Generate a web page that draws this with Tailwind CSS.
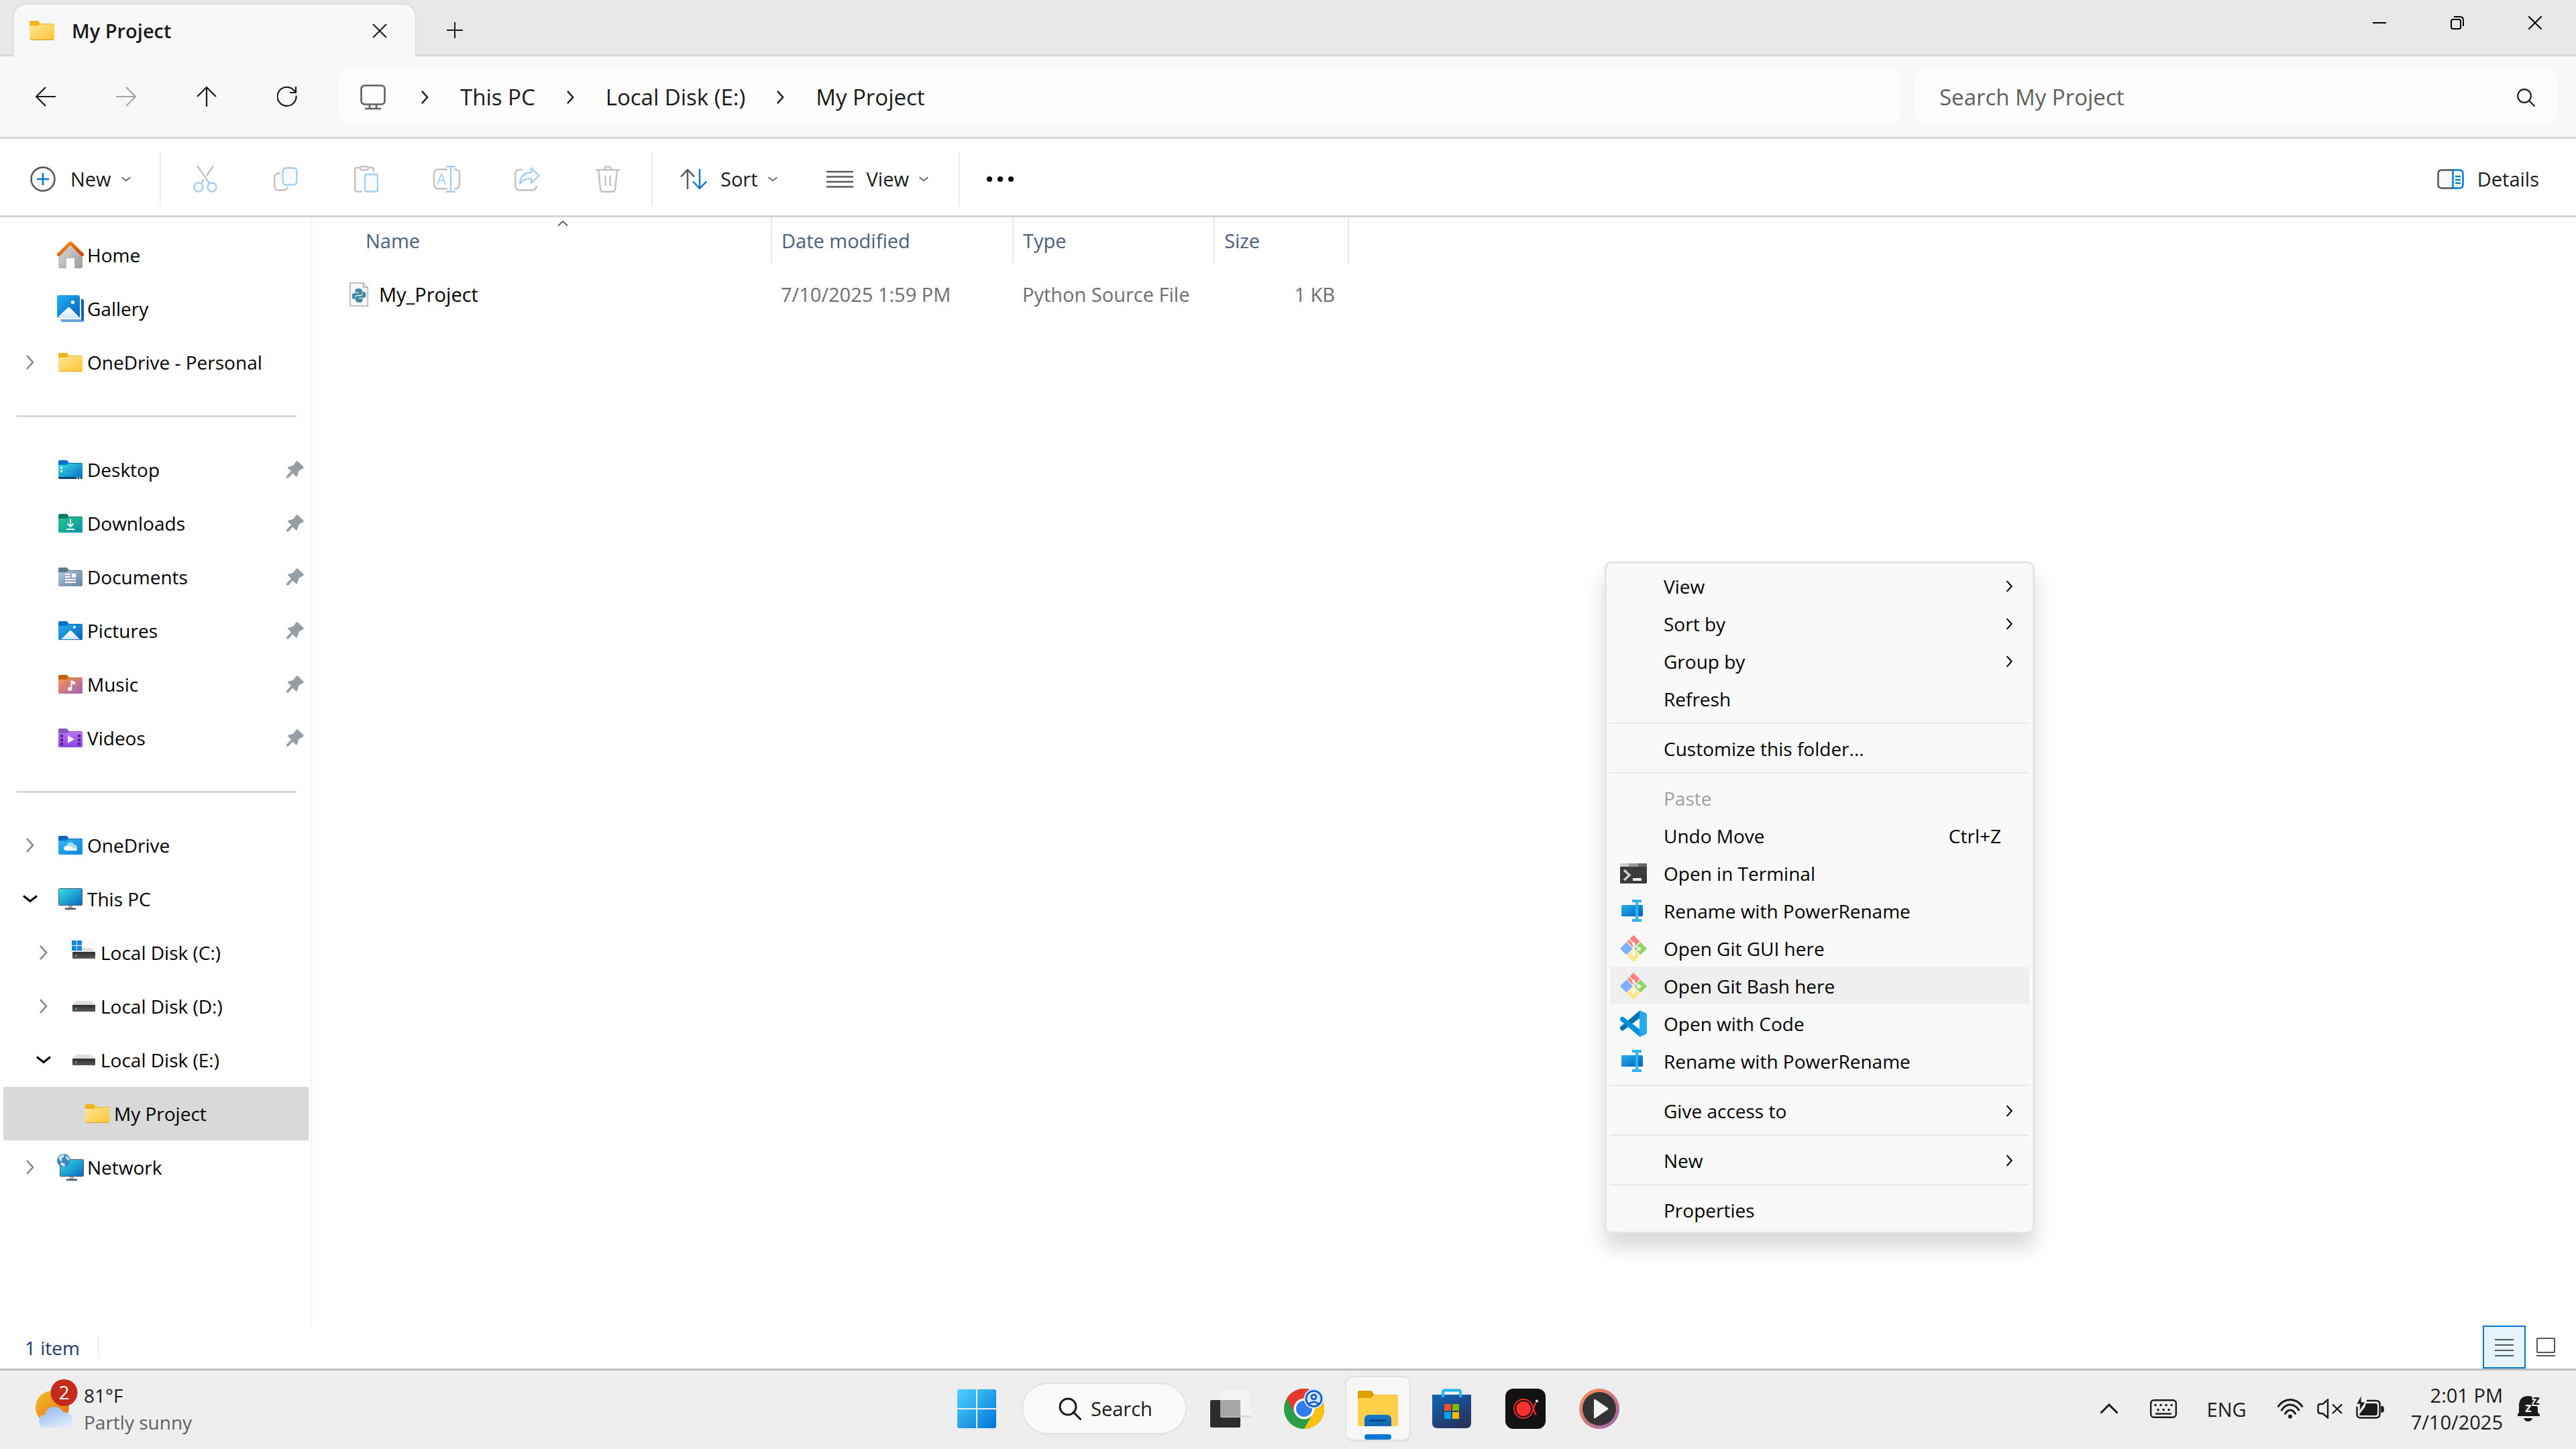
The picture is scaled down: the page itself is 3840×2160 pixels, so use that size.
<!DOCTYPE html>
<html lang="en">
<head>
  <meta charset="utf-8">
  <meta name="viewport" content="width=device-width, initial-scale=1.0">
  <title>My Project</title>
  <script src="https://cdn.jsdelivr.net/npm/@tailwindcss/browser@4"></script>
</head>
<body class="flex flex-col h-screen overflow-hidden bg-white font-['Open_Sans','Noto_Sans',sans-serif] text-[29px] leading-10 text-[#1a1a1a]">

<!-- shared icons and gradients -->
<svg class="absolute w-0 h-0" aria-hidden="true">
  <defs>
    <linearGradient id="yellow" x2="1" y2="1"><stop stop-color="#ffe69c"/><stop offset="1" stop-color="#ffc52e"/></linearGradient>
    <linearGradient id="cyan" x2="1" y2="1"><stop stop-color="#35e0e4"/><stop offset="1" stop-color="#0a68c4"/></linearGradient>
    <linearGradient id="green" x2="1" y2="1"><stop stop-color="#2fc48a"/><stop offset="1" stop-color="#0593a8"/></linearGradient>
    <linearGradient id="steel" x2="1" y2="1"><stop stop-color="#b5c6da"/><stop offset="1" stop-color="#6581a3"/></linearGradient>
    <linearGradient id="blue" x2="1" y2="1"><stop stop-color="#25b0f0"/><stop offset="1" stop-color="#0560bd"/></linearGradient>
    <linearGradient id="peach" x2="1" y2="1"><stop stop-color="#ff9350"/><stop offset="1" stop-color="#9c62b6"/></linearGradient>
    <linearGradient id="purple" x2="0" y2="1"><stop stop-color="#b873f5"/><stop offset="1" stop-color="#8b45e6"/></linearGradient>
    <linearGradient id="sky" x2="1" y2="1"><stop stop-color="#30b5f2"/><stop offset="1" stop-color="#0f86dc"/></linearGradient>
    <linearGradient id="roof" x2="1" y2="1"><stop stop-color="#f7950c"/><stop offset="1" stop-color="#d33f02"/></linearGradient>
    <linearGradient id="wall" x2="1" y2="1"><stop stop-color="#dcdcdc"/><stop offset="1" stop-color="#9c9c9c"/></linearGradient>
    <linearGradient id="dark" x2="0" y2="1"><stop stop-color="#2c2c2c"/><stop offset="1" stop-color="#5a5a5a"/></linearGradient>
    <linearGradient id="hill" x2="0" y2="1"><stop stop-color="#fff"/><stop offset="1" stop-color="#cfe7fb"/></linearGradient>

    <symbol id="chev-right" viewBox="0 0 14 22"><path d="M2 1l9 10-9 10" fill="none" stroke="currentColor" stroke-width="2.6"/></symbol>
    <symbol id="chev-down" viewBox="0 0 22 12"><path d="M1 1.500l10 8 10-8" fill="none" stroke="currentColor" stroke-width="3"/></symbol>
    <path id="folder-back" d="M0 2q0-2 2-2h9.500q1.700 0 2.500 1.400L15.500 4H34q2 0 2 2v6H0z"/>
    <path id="folder-front" d="M0 7h11q1.600 0 2.600-1l.6-.6q.6-.5 1.600-.5H34.500q1.500 0 1.500 1.500V26q0 2-2 2H2q-2 0-2-2z"/>
    <symbol id="folder" viewBox="0 0 36 28">
      <use href="#folder-back" fill="#f5b21b"/><use href="#folder-front" fill="url(#yellow)"/>
      <path d="M1 27.500h34" stroke="#e0a020"/>
    </symbol>
    <symbol id="pin" viewBox="0 0 26 26"><path d="M14.500.8q1.200-1.200 2.600 0l8 7.800q1.400 1.600-.4 2.700l-6.200 3.400-2.600 8.200q-.6 1.200-1.700.3l-5-4.800L3 25.500H0V23l7-7.700-4.700-4.500q-1-1.100.3-1.700l7.600-2.300z" fill="#959ea4"/></symbol>
    <symbol id="disk" viewBox="0 0 36 16"><path d="M7 0h22l6 6H1z" fill="#dedfe3"/><rect x="1" y="6" width="34" height="10" rx="1" fill="url(#dark)"/><rect x="5" y="10.500" width="2.500" height="2" fill="#3df13d"/></symbol>
    <symbol id="git" viewBox="0 0 40 40">
      <path d="M20 0l9.500 9.500L20 19l-9.500-9.500z" fill="#ff8080"/><path d="M9.500 10.500L19 20l-9.500 9.500L0 20z" fill="#7fb0ff"/><path d="M30.500 10.500L40 20l-9.500 9.500L21 20z" fill="#8cd45f"/><path d="M20 21l9.500 9.500L20 40l-9.500-9.500z" fill="#ffe680"/>
      <path d="M13.500 6L20 12.500V28M20 13l7 7" fill="none" stroke="#f9f9f9" stroke-width="1.700"/>
      <circle cx="20" cy="12.500" r="2.200" fill="#f9f9f9"/><circle cx="28" cy="20.500" r="3" fill="#f9f9f9"/><circle cx="20" cy="28.500" r="3" fill="#f9f9f9"/>
    </symbol>
    <symbol id="power-rename" viewBox="0 0 40 40">
      <rect x="2" y="11" width="32" height="17" rx="1.500" fill="url(#blue)"/>
      <path d="M18 5h14M18 34h14M25 5v29" stroke="#2bb4ee" stroke-width="4" fill="none"/>
    </symbol>
  </defs>
</svg>

<!-- title bar -->
<header class="flex shrink-0 h-[84px] bg-[#e8e8e8]">
  <div class="w-[19px] border-b-3 border-[#d9d9d9]"></div>
  <div class="flex items-center w-[602px] mt-[5px] pl-[23px] pr-[42px] rounded-t-[20px] border-2 border-b-0 border-[#e0e0e0] bg-[#f8f8f8] font-semibold">
    <svg class="w-[37px] h-[29px]"><use href="#folder"/></svg>
    <span class="ml-[26px]">My Project</span>
    <button class="ml-auto" aria-label="Close tab"><svg class="block w-[22px] h-[22px]" viewBox="0 0 22 22"><path d="M1 1l20 20M21 1L1 21" stroke="#1a1a1a" stroke-width="2"/></svg></button>
  </div>
  <div class="flex flex-1 justify-between pl-[45px] pr-[3px] border-b-3 border-[#d9d9d9]">
    <button class="pt-2" aria-label="New tab"><svg class="block w-6 h-6" viewBox="0 0 24 24"><path d="M0 12h24M12 0v24" stroke="#1a1a1a" stroke-width="2"/></svg></button>
    <div class="flex h-[68px]">
      <button class="flex items-center justify-center w-[116px]" aria-label="Minimize"><svg class="w-5 h-5" viewBox="0 0 20 20"><path d="M0 10h20" stroke="#000" stroke-width="2"/></svg></button>
      <button class="flex items-center justify-center w-[116px]" aria-label="Restore"><svg class="w-5 h-5" viewBox="0 0 20 20" fill="none" stroke="#000" stroke-width="2"><rect x="1" y="5" width="14" height="14" rx="2.500"/><path d="M5 1h9q5 0 5 5v9"/></svg></button>
      <button class="flex items-center justify-center w-[116px]" aria-label="Close"><svg class="w-5 h-5" viewBox="0 0 20 20"><path d="M0 0l20 20M20 0L0 20" stroke="#000" stroke-width="2"/></svg></button>
    </div>
  </div>
</header>

<!-- navigation row -->
<div class="flex shrink-0 items-center h-[123px] pl-2 pr-7 border-b-3 border-[#d4d4d4] bg-[#f8f8f8] text-[33px]">
  <button class="flex justify-center w-[120px]" aria-label="Back"><svg class="w-[30px] h-[30px]" viewBox="0 0 30 30" fill="none" stroke="#1a1a1a" stroke-width="2.200"><path d="M30 15H1M15 1L1 15l14 14"/></svg></button>
  <button class="flex justify-center w-[120px]" aria-label="Forward" disabled><svg class="w-[30px] h-[30px]" viewBox="0 0 30 30" fill="none" stroke="#a3a3a3" stroke-width="2.200"><path d="M0 15h29M15 1l14 14-14 14"/></svg></button>
  <button class="flex justify-center w-[120px]" aria-label="Up"><svg class="w-[30px] h-[30px]" viewBox="0 0 30 30" fill="none" stroke="#1a1a1a" stroke-width="2.200"><path d="M15 30V1M1 15L15 1l14 14"/></svg></button>
  <button class="flex justify-center w-[120px]" aria-label="Refresh"><svg class="w-[30px] h-[30px]" viewBox="0 0 30 30" fill="none" stroke="#1a1a1a" stroke-width="2.200"><path d="M28.500 13.500A14 14 0 1 1 24.500 5l3.500 3.500M28 0v9h-9"/></svg></button>
  <nav class="flex flex-1 items-center gap-[46px] h-20 ml-4 pt-[2px] pl-[33px] rounded-xl bg-[#fdfdfd]" aria-label="Address">
    <button class="mr-[6px]" aria-label="Locations"><svg class="block w-[38px] h-[38px]" viewBox="0 0 38 38" fill="none" stroke="#5f5f5f" stroke-width="2.600"><rect x="1.500" y="1.500" width="35" height="28" rx="5"/><path d="M14 30v6M24 30v6M7 36h24"/></svg></button>
    <svg class="w-[13px] h-5"><use href="#chev-right"/></svg>
    <a href="#">This PC</a>
    <svg class="w-[13px] h-5"><use href="#chev-right"/></svg>
    <a href="#">Local Disk (E:)</a>
    <svg class="w-[13px] h-5"><use href="#chev-right"/></svg>
    <a href="#">My Project</a>
  </nav>
  <form class="flex items-center w-[958px] h-20 ml-[21px] pt-[2px] pl-[37px] pr-[33px] rounded-xl bg-[#fdfdfd]">
    <input class="flex-1 outline-none placeholder:text-[#5f5f5f]" type="search" placeholder="Search My Project" aria-label="Search My Project">
    <button type="button" aria-label="Search"><svg class="block w-[27px] h-[27px]" viewBox="0 0 27 27" fill="none" stroke="#1a1a1a" stroke-width="2.200"><circle cx="11" cy="11" r="9.800"/><path d="M18 18l8.500 8.500"/></svg></button>
  </form>
</div>

<!-- command bar -->
<div class="flex shrink-0 items-center h-[117px] pt-[6px] pr-[55px] border-b-3 border-[#d4d4d4]">
  <button class="flex items-center w-[238px] pl-[45px]">
    <svg class="w-[38px] h-[38px]" viewBox="0 0 38 38" fill="none"><circle cx="19" cy="19" r="17.500" fill="#fafafa" stroke="#555" stroke-width="2.500"/><path d="M10 19h18M19 10v18" stroke="#0078d4" stroke-width="2.500"/></svg>
    <span class="ml-[22px]">New</span>
    <svg class="w-[14px] h-2 ml-[15px] text-[#666]"><use href="#chev-down"/></svg>
  </button>
  <div class="w-[2px] h-20 bg-[#ececec]"></div>
  <div class="flex items-center ml-[6px]">
    <button class="flex justify-center w-[120px]" aria-label="Cut" disabled><svg class="w-9 h-10" viewBox="0 0 36 40" fill="none" stroke-width="2.400"><path d="M6 0l18 26M30 0L20 15M16 20l-4 6" stroke="#c2c2c2"/><circle cx="8" cy="32" r="6.500" stroke="#a4d0f0"/><circle cx="28" cy="32" r="6.500" stroke="#a4d0f0"/></svg></button>
    <button class="flex justify-center w-[120px]" aria-label="Copy" disabled><svg class="w-9 h-9" viewBox="0 0 36 36" fill="none" stroke-width="2.400"><path d="M10 9Q1.200 9 1.200 16V28Q1.200 34.500 8 34.500h6q6 0 7-5" stroke="#c2c2c2"/><rect x="13.500" y="1.500" width="21" height="25" rx="5" fill="#fafafa" stroke="#a4d0f0"/></svg></button>
    <button class="flex justify-center w-[120px]" aria-label="Paste" disabled><svg class="w-9 h-10" viewBox="0 0 36 40" fill="none" stroke-width="2.400"><path d="M9 3H4Q1.200 3 1.200 6v29q0 3.500 3 3.500H12M21 3h5q3 0 3 3v3" stroke="#c2c2c2"/><rect x="9" y="1.200" width="12" height="5" rx="2.500" stroke="#c2c2c2"/><rect x="16" y="13" width="19" height="25.500" rx="2.500" fill="#fafafa" stroke="#a4d0f0"/></svg></button>
    <button class="flex justify-center w-[120px]" aria-label="Rename" disabled><svg class="w-[42px] h-10" viewBox="0 0 42 40" fill="none" stroke-width="2.400"><path d="M22 5.500H9q-7 0-7 7v15q0 7 7 7h13M32 5.500q8 0 8 7v15q0 7-8 7" stroke="#c2c2c2"/><path d="M20 1.200h14M20 38.800h14M27 1v38" stroke="#a4d0f0"/><text x="6" y="28" font-size="22" fill="#a4d0f0">A</text></svg></button>
    <button class="flex justify-center w-[120px]" aria-label="Share" disabled><svg class="w-[38px] h-9" viewBox="0 0 38 36" fill="none" stroke-width="2.400"><path d="M12 4H8Q1.200 4 1.200 10v18q0 6.500 7 6.500h18q6.500 0 6.500-7" stroke="#c2c2c2"/><path d="M25 1.500L36.500 13 25 24v-6.500Q14 16.500 8 25 8 9 25 8z" fill="#fafafa" stroke="#a4d0f0" stroke-linejoin="round"/></svg></button>
    <button class="flex justify-center w-[120px]" aria-label="Delete" disabled><svg class="w-9 h-10" viewBox="0 0 36 40" fill="none" stroke="#c2c2c2" stroke-width="2.400"><path d="M0 6.200h36M13 6q0-5 5-5t5 5M4 6l3 29q.5 3.800 4 3.800h14q3.500 0 4-3.800l3-29M14.500 15v15M21.500 15v15"/></svg></button>
  </div>
  <div class="w-[2px] h-20 ml-[5px] bg-[#ececec]"></div>
  <button class="flex items-center ml-[41px]">
    <svg class="w-10 h-[30px]" viewBox="0 0 40 30" fill="none" stroke-width="2.400"><path d="M1 11.500L11 1l10 10.500M11 1v29" stroke="#555"/><path d="M19 18.500L29 29l10-10.500M29 29V0" stroke="#0078d4"/></svg>
    <span class="ml-5">Sort</span>
    <svg class="w-[14px] h-2 ml-[15px] text-[#666]"><use href="#chev-down"/></svg>
  </button>
  <button class="flex items-center ml-[73px]">
    <svg class="w-10 h-[26px]" viewBox="0 0 40 26"><path d="M0 2h40M0 9.500h40M0 17h40M0 24.500h40" stroke="#5a5a5a" stroke-width="2.500"/></svg>
    <span class="ml-5">View</span>
    <svg class="w-[14px] h-2 ml-[15px] text-[#666]"><use href="#chev-down"/></svg>
  </button>
  <div class="w-[2px] h-20 ml-[45px] bg-[#ececec]"></div>
  <button class="ml-10" aria-label="See more"><svg class="block w-10 h-2" viewBox="0 0 40 8"><circle cx="4" cy="4" r="4"/><circle cx="20" cy="4" r="4"/><circle cx="36" cy="4" r="4"/></svg></button>
  <button class="flex items-center ml-auto">
    <svg class="w-10 h-[30px]" viewBox="0 0 40 30" fill="none" stroke-width="2.500"><path d="M23 1.500H7q-5.500 0-5.500 5.500v16q0 5.500 5.500 5.500h16" fill="#fafafa" stroke="#555"/><path d="M23.500 1.500H33q5.500 0 5.500 5.500v16q0 5.500-5.500 5.500h-9.500zM27 11h8M27 16h8M27 21h8" stroke="#0078d4"/></svg>
    <span class="ml-5">Details</span>
  </button>
</div>

<div class="flex flex-1 min-h-0">
  <!-- navigation pane -->
  <nav class="shrink-0 w-[466px] pt-4 pl-[5px] pr-[3px] border-r-3 border-[#f7f7f7] text-[28px] text-black" aria-label="Folders">
    <a href="#" class="flex items-center h-20 pl-5">
      <span class="w-10 mr-5"></span>
      <svg class="w-10 h-10" viewBox="0 0 40 40"><path d="M2 20L20 5l18 15v17q0 3-3 3h-9V25H14v15H5q-3 0-3-3z" fill="url(#wall)"/><path d="M2.500 19.500L18.500 3.500q1.500-1.500 3 0l16 16" fill="none" stroke="url(#roof)" stroke-width="5" stroke-linecap="round"/></svg>
      <span class="ml-[5px]">Home</span>
    </a>
    <a href="#" class="flex items-center h-20 pl-5">
      <span class="w-10 mr-5"></span>
      <svg class="w-10 h-10" viewBox="0 0 40 40"><path d="M36 5q4 1 4 4v28q0 3-3 3H9q-3 0-4-4h31z" fill="#0b62b8"/><path d="M5 36h31l3 3-2 1H9q-3 0-4-4z" fill="#6ba3d8"/><rect width="36" height="36" rx="3" fill="#fff"/><rect width="34" height="34" rx="3" fill="url(#blue)"/><circle cx="23.500" cy="10.500" r="2.600" fill="#fff"/><path d="M1.500 32.500L15.500 19q2-1.800 4 0l13.500 13.500q-1 1.500-3 1.500H4q-2 0-2.500-1.500z" fill="url(#hill)"/></svg>
      <span class="ml-[5px]">Gallery</span>
    </a>
    <a href="#" class="flex items-center h-20 pl-5">
      <span class="flex justify-center w-10 mr-5 text-[#868686]"><svg class="w-[14px] h-[22px]"><use href="#chev-right"/></svg></span>
      <svg class="w-9 h-7 mx-[2px]"><use href="#folder"/></svg>
      <span class="ml-[5px]">OneDrive - Personal</span>
    </a>
    <div class="flex items-center h-20 pl-5 pr-[18px]"><hr class="flex-1 border-t-3 border-[#d6d6d6]"></div>
    <a href="#" class="flex items-center h-20 pl-5 pr-[7px]">
      <span class="w-10 mr-5"></span>
      <svg class="w-9 h-7 mx-[2px]" viewBox="0 0 36 28"><use href="#folder-back" fill="#0070cc"/><use href="#folder-front" fill="url(#cyan)"/><path d="M0 25h36v1q0 2-2 2H2q-2 0-2-2z" fill="#0a4779"/><path d="M3 10h3v3H3zM3 15h3v3H3zM27 25.500h2v2h-2zM31 25.500h2v2h-2z" fill="#e8fbff"/></svg>
      <span class="ml-[5px]">Desktop</span>
      <svg class="w-[26px] h-[26px] ml-auto"><use href="#pin"/></svg>
    </a>
    <a href="#" class="flex items-center h-20 pl-5 pr-[7px]">
      <span class="w-10 mr-5"></span>
      <svg class="w-9 h-7 mx-[2px]" viewBox="0 0 36 28"><use href="#folder-back" fill="#0a7d5b"/><use href="#folder-front" fill="url(#green)"/><path d="M18 8v11M13.500 14.500L18 19l4.500-4.500M12 23h12" fill="none" stroke="#fff" stroke-width="2"/></svg>
      <span class="ml-[5px]">Downloads</span>
      <svg class="w-[26px] h-[26px] ml-auto"><use href="#pin"/></svg>
    </a>
    <a href="#" class="flex items-center h-20 pl-5 pr-[7px]">
      <span class="w-10 mr-5"></span>
      <svg class="w-9 h-7 mx-[2px]" viewBox="0 0 36 28"><use href="#folder-back" fill="#5f7a88"/><use href="#folder-front" fill="url(#steel)"/><path d="M10 10h8M10 14h8M10 18h16M10 22h16" stroke="#fff" stroke-width="2"/><path d="M20 9h6v6h-6z" fill="#fff"/></svg>
      <span class="ml-[5px]">Documents</span>
      <svg class="w-[26px] h-[26px] ml-auto"><use href="#pin"/></svg>
    </a>
    <a href="#" class="flex items-center h-20 pl-5 pr-[7px]">
      <span class="w-10 mr-5"></span>
      <svg class="w-9 h-7 mx-[2px]" viewBox="0 0 36 28"><use href="#folder-back" fill="#0070cc"/><use href="#folder-front" fill="url(#blue)"/><circle cx="24" cy="9" r="2" fill="#fff"/><path d="M4 27l12.500-12.500q1.500-1.400 3 0L32 27z" fill="url(#hill)"/></svg>
      <span class="ml-[5px]">Pictures</span>
      <svg class="w-[26px] h-[26px] ml-auto"><use href="#pin"/></svg>
    </a>
    <a href="#" class="flex items-center h-20 pl-5 pr-[7px]">
      <span class="w-10 mr-5"></span>
      <svg class="w-9 h-7 mx-[2px]" viewBox="0 0 36 28"><use href="#folder-back" fill="#c4620f"/><use href="#folder-front" fill="url(#peach)"/><circle cx="17" cy="21" r="3" fill="#fff"/><path d="M18.500 21V8l6.500 2.500v4l-4.500-1.500v8z" fill="#fff"/></svg>
      <span class="ml-[5px]">Music</span>
      <svg class="w-[26px] h-[26px] ml-auto"><use href="#pin"/></svg>
    </a>
    <a href="#" class="flex items-center h-20 pl-5 pr-[7px]">
      <span class="w-10 mr-5"></span>
      <svg class="w-9 h-7 mx-[2px]" viewBox="0 0 36 28"><use href="#folder-back" fill="#8659bd"/><use href="#folder-front" fill="url(#purple)"/><path d="M3 9h4v4H3zM3 15h4v4H3zM3 21h4v4H3zM29 9h4v4h-4zM29 15h4v4h-4zM29 21h4v4h-4z" fill="#4c2a86"/><path d="M14 10l10 6-10 6z" fill="#f3eefb"/></svg>
      <span class="ml-[5px]">Videos</span>
      <svg class="w-[26px] h-[26px] ml-auto"><use href="#pin"/></svg>
    </a>
    <div class="flex items-center h-20 pl-5 pr-[18px]"><hr class="flex-1 border-t-3 border-[#d6d6d6]"></div>
    <a href="#" class="flex items-center h-20 pl-5">
      <span class="flex justify-center w-10 mr-5 text-[#868686]"><svg class="w-[14px] h-[22px]"><use href="#chev-right"/></svg></span>
      <svg class="w-9 h-7 mx-[2px]" viewBox="0 0 36 28"><use href="#folder-back" fill="#0067c0"/><use href="#folder-front" fill="url(#sky)"/><path d="M12 22q-4 0-4-3.500t4-4q1.500-5 6-5t6 4q4 0 4 4t-4 4.500z" fill="#a9dcf9"/><path d="M12 22q-3.500-.5-3.500-3.500T13 15q3-1 5 1l7 3q3 0 3 1.500T25 22z" fill="#fff"/></svg>
      <span class="ml-[5px]">OneDrive</span>
    </a>
    <a href="#" class="flex items-center h-20 pl-5">
      <span class="flex justify-center w-10 mr-5"><svg class="w-[22px] h-3"><use href="#chev-down"/></svg></span>
      <svg class="w-9 h-8 mx-[2px]" viewBox="0 0 36 32"><path d="M15 26h6v4h-6z" fill="#a9b0b8"/><path d="M10 29.500h16V32H10z" fill="#4b5560"/><rect x=".5" y=".5" width="35" height="25" rx="1" fill="url(#cyan)" stroke="#4d5a66"/></svg>
      <span class="ml-[5px]">This PC</span>
    </a>
    <a href="#" class="flex items-center h-20 pl-10">
      <span class="flex justify-center w-10 mr-5 text-[#868686]"><svg class="w-[14px] h-[22px]"><use href="#chev-right"/></svg></span>
      <svg class="w-9 h-9 mx-[2px]" viewBox="0 0 36 36"><use href="#disk" y="11" width="36" height="16"/><path d="M0 0h7v7H0zM8 0h7v7H8zM0 8h7v7H0zM8 8h7v7H8z" fill="#1286dc"/></svg>
      <span class="ml-[5px]">Local Disk (C:)</span>
    </a>
    <a href="#" class="flex items-center h-20 pl-10">
      <span class="flex justify-center w-10 mr-5 text-[#868686]"><svg class="w-[14px] h-[22px]"><use href="#chev-right"/></svg></span>
      <svg class="w-9 h-4 mx-[2px]"><use href="#disk"/></svg>
      <span class="ml-[5px]">Local Disk (D:)</span>
    </a>
    <a href="#" class="flex items-center h-20 pl-10">
      <span class="flex justify-center w-10 mr-5"><svg class="w-[22px] h-3"><use href="#chev-down"/></svg></span>
      <svg class="w-9 h-4 mx-[2px]"><use href="#disk"/></svg>
      <span class="ml-[5px]">Local Disk (E:)</span>
    </a>
    <a href="#" class="flex items-center h-20 pl-15 rounded-[2px] bg-[#d9d9d9]" aria-current="page">
      <span class="w-10 mr-5"></span>
      <svg class="w-9 h-7 mx-[2px]"><use href="#folder"/></svg>
      <span class="ml-[5px]">My Project</span>
    </a>
    <a href="#" class="flex items-center h-20 pl-5">
      <span class="flex justify-center w-10 mr-5 text-[#868686]"><svg class="w-[14px] h-[22px]"><use href="#chev-right"/></svg></span>
      <svg class="w-10 h-10" viewBox="0 0 40 40"><path d="M19 34h6v4h-6z" fill="#a9b0b8"/><path d="M14 37.500h16V40H14z" fill="#4b5560"/><rect x="4.500" y="8.500" width="35" height="25" rx="1" fill="url(#cyan)" stroke="#4d5a66"/><circle cx="10" cy="10" r="10" fill="#3d86b8"/><path d="M2 6q4-5 8-5l1 3-4 3 1 3-3 1zM12 3l5 2 2 5-4-1zM6 13l5 1 1 5q-5 0-7-4z" fill="#c7e6f3"/></svg>
      <span class="ml-[5px]">Network</span>
    </a>
  </nav>

  <!-- file list -->
  <main class="flex-1 pl-[34px]">
    <table class="table-fixed w-[1510px] text-left text-[#6d6d6d]">
      <colgroup><col class="w-[650px]"><col class="w-[360px]"><col class="w-[300px]"><col class="w-[200px]"></colgroup>
      <thead class="text-[#4c607a]">
        <tr class="h-[67px]">
          <th class="relative pt-[3px] pl-[45px] font-normal border-r-2 border-[#e8e8e8]">
            Name
            <svg class="absolute top-[5px] left-[331px] w-4 h-2" viewBox="0 0 16 8" fill="none"><path d="M1 7.500L8 1l7 6.500" stroke="#555" stroke-width="1.800"/></svg>
          </th>
          <th class="pt-[3px] pl-[14px] font-normal border-r-2 border-[#e8e8e8]">Date modified</th>
          <th class="pt-[3px] pl-[14px] font-normal border-r-2 border-[#e8e8e8]">Type</th>
          <th class="pt-[3px] pl-[14px] font-normal border-r-2 border-[#e8e8e8]">Size</th>
        </tr>
      </thead>
      <tbody>
        <tr class="h-[96px]">
          <td class="pl-[21px]">
            <a href="#" class="flex items-center text-black">
              <svg class="w-7 h-9" viewBox="0 0 28 36"><path d="M.8.800H20.500l6.700 6.700V35H.8z" fill="#f7f9fb" stroke="#b0b0b0" stroke-width="1.500"/><path d="M20.500 1v6.500H27" fill="#e4e4e4" stroke="#b0b0b0" stroke-width="1.300"/><g transform="translate(3.500 9)" fill="#4489a8"><path id="snake" d="M10 0C6 0 5 1.500 5 3.500V6h5.500v1h-7C1 7 0 9 0 11.500S1 16 3.500 16H5v-3c0-2 1.500-3.200 3.500-3.200H13c1.600 0 2.500-1 2.500-2.500V3.500C15.500 1.300 13.500 0 10 0z"/><use href="#snake" transform="rotate(180 10.500 10.500)"/></g></svg>
              <span class="ml-4">My_Project</span>
            </a>
          </td>
          <td class="pl-[14px]">7/10/2025 1:59 PM</td>
          <td class="pl-[14px]">Python Source File</td>
          <td class="pr-5 text-right">1 KB</td>
        </tr>
      </tbody>
    </table>
  </main>
</div>

<!-- status bar -->
<footer class="flex shrink-0 items-center h-16 pl-[37px] pr-[31px] text-[28px] text-[#1d3a6b]">
  <span class="pt-[2px]">1 item</span>
  <div class="w-[3px] h-[34px] ml-[26px] bg-[#f3f3f3]"></div>
  <button class="flex items-center justify-center w-16 h-16 ml-auto border-2 border-[#0078d4] bg-[#e5f3fb]" aria-label="Details view"><svg class="w-7 h-7 mt-[2px]" viewBox="0 0 28 28"><path d="M0 2h28M0 10h28M0 18h28M0 26h28" stroke="#555" stroke-width="2"/></svg></button>
  <button class="ml-4" aria-label="Large icons view"><svg class="block w-7 h-7" viewBox="0 0 28 28" fill="none" stroke="#555" stroke-width="2"><rect x="1" y="1" width="26" height="21" rx="1"/><path d="M0 27h28"/></svg></button>
</footer>

<!-- taskbar -->
<div class="grid grid-cols-[1fr_auto_1fr] shrink-0 items-center h-[120px] pb-[3px] border-t-3 border-[#bdbdbd] bg-[#eee]">
  <button class="flex items-center justify-self-start pl-[53px] text-left text-[28px] leading-10">
    <svg class="w-16 h-[90px]" viewBox="0 0 64 90">
      <defs>
        <linearGradient id="sun" x2=".8" y2="1"><stop stop-color="#edc432"/><stop offset="1" stop-color="#f26a0c"/></linearGradient>
        <linearGradient id="cloud" x2=".6" y2="1"><stop stop-color="#8fb2ee"/><stop offset="1" stop-color="#dce9fb"/></linearGradient>
      </defs>
      <circle cx="25" cy="43" r="25" fill="url(#sun)"/>
      <path d="M15 73q-10 0-10-9.500T14 54q2-12 14-12 9 0 13 8 14 0 14 12 0 11-12 11z" fill="url(#cloud)"/>
      <circle cx="42.500" cy="21" r="20" fill="#c42b1c"/><text x="42.500" y="31" font-size="28" text-anchor="middle" fill="#fff">2</text>
    </svg>
    <span class="ml-2"><span class="block">81°F</span><span class="block text-[#606060]">Partly sunny</span></span>
  </button>

  <div class="flex items-center">
    <button class="flex justify-center w-[110px]" aria-label="Start"><svg class="w-[58px] h-[58px]" viewBox="0 0 58 58"><defs><linearGradient id="win" gradientUnits="userSpaceOnUse" x2="58" y2="58"><stop stop-color="#4fd3ff"/><stop offset="1" stop-color="#0074d6"/></linearGradient></defs><path d="M2 0h26v28H0V2zM30 0h26l2 2v26H30zM0 30h28v28H2l-2-2zM30 30h28v26l-2 2H30z" fill="url(#win)"/></svg></button>
    <button class="flex items-center w-[246px] h-[78px] ml-3 mr-[10px] pl-[53px] rounded-full border-2 border-b-3 border-[#e3e3e3] bg-[#fafafa]">
      <svg class="w-[34px] h-[34px]" viewBox="0 0 34 34" fill="none" stroke="#1a1a1a" stroke-width="3"><circle cx="14" cy="14" r="12"/><path d="M22 22l10.500 10.500" stroke-linecap="round"/></svg>
      <span class="ml-[14px]">Search</span>
    </button>
    <button class="flex justify-center w-[110px]" aria-label="Task view"><svg class="w-[60px] h-[60px]" viewBox="0 0 60 60"><rect y="17" width="45" height="41" rx="2" fill="#2d2d2d"/><rect x="15" y="2" width="45" height="41" rx="2" fill="#d9d9d9"/><rect x="15" y="2" width="45" height="38" rx="2" fill="#f3f3f3"/><path d="M15 17h30v25H15z" fill="#a6a6a6"/></svg></button>
    <button class="flex justify-center w-[110px]" aria-label="Chrome"><svg class="w-[60px] h-[60px]" viewBox="0 0 60 60"><circle cx="30" cy="30" r="30" fill="#2a9d49"/><path d="M56 15a30 30 0 0 1-26 45l13-22.500V15z" fill="#fcc10f"/><path d="M4 15a30 30 0 0 1 52 0H30L17 37.500z" fill="#e5392c"/><circle cx="30" cy="30" r="15.500" fill="#fff"/><circle cx="30" cy="30" r="12" fill="#2f7cec"/><circle cx="44.500" cy="15" r="15" fill="#d3e3fd"/><circle cx="44.500" cy="15" r="11.500" fill="none" stroke="#0b57d0" stroke-width="2.600"/><circle cx="44.500" cy="12.500" r="3.500" fill="none" stroke="#0b57d0" stroke-width="2.600"/><path d="M37 23q7.500-6.500 15 0" fill="none" stroke="#0b57d0" stroke-width="2.600"/></svg></button>
    <button class="relative flex items-center justify-center w-[98px] h-[98px] mx-[6px] rounded-xl border-2 border-b-3 border-[#e2e2e2] bg-[#f7f7f7]" aria-label="File Explorer">
      <svg class="w-[60px] h-[54px]" viewBox="0 0 60 54"><defs><linearGradient id="flap" x2="0" y2="1"><stop stop-color="#1679c9"/><stop offset="1" stop-color="#0f66b4"/></linearGradient></defs><path d="M0 3q0-3 3-3h15q3 0 4.500 3l2 3H57q3 0 3 3v5H0z" fill="#dda000"/><path d="M0 11h20l4-4.500h34q2 0 2 2V51q0 2-2 2H2q-2 0-2-2z" fill="#ffcf4a"/><path d="M10 53V43q0-7 7-7h26q7 0 7 7v10z" fill="url(#flap)"/><path d="M19 44.500h22" stroke="#08468c" stroke-width="3" stroke-linecap="round"/></svg>
      <span class="absolute bottom-0 w-10 h-2 rounded-full bg-[#0078d4]"></span>
    </button>
    <button class="flex justify-center w-[110px]" aria-label="Microsoft Store"><svg class="w-[60px] h-[60px]" viewBox="0 0 60 60"><defs><linearGradient id="bag" x2=".6" y2="1"><stop stop-color="#0f62b8"/><stop offset="1" stop-color="#27355f"/></linearGradient></defs><path d="M1 9h58v42q0 8-8 8H9q-8 0-8-8z" fill="url(#bag)"/><path d="M17 13V5q0-2.500 2.500-2.500h21Q43 2.500 43 5v8" fill="none" stroke="#22b7f4" stroke-width="4"/><path d="M19 23h10v10H19z" fill="#f25022"/><path d="M31 23h10v10H31z" fill="#7fba00"/><path d="M19 35h10v10H19z" fill="#00a4ef"/><path d="M31 35h10v10H31z" fill="#ffb900"/></svg></button>
    <button class="flex justify-center w-[110px]" aria-label="Screen recorder"><svg class="w-[60px] h-[60px]" viewBox="0 0 60 60"><rect width="60" height="60" rx="12" fill="#131212"/><circle cx="27" cy="30" r="14" fill="none" stroke="#e62e2e" stroke-width="2"/><circle cx="27" cy="30" r="11" fill="#fb3033"/><path d="M46 21q-8 9 0 18" fill="none" stroke="#e62e2e" stroke-width="2.200"/><circle cx="47" cy="18.500" r="2" fill="#fff"/></svg></button>
    <button class="flex justify-center w-[110px]" aria-label="Media Player"><svg class="w-[60px] h-[60px]" viewBox="0 0 60 60"><circle cx="30" cy="30" r="30" fill="url(#peach)"/><circle cx="30" cy="30" r="25" fill="#333"/><path d="M22 17q0-2 2-1l19 13q1 1 0 2L24 44q-2 1-2-1z" fill="#f2f2f2"/></svg></button>
  </div>

  <div class="flex items-center justify-self-end pr-[51px]">
    <button aria-label="Show hidden icons"><svg class="block w-7 h-4" viewBox="0 0 28 16"><path d="M1.500 14.500L14 2l12.500 12.500" fill="none" stroke="#1a1a1a" stroke-width="3"/></svg></button>
    <button class="ml-[47px]" aria-label="Touch keyboard"><svg class="block w-10 h-7" viewBox="0 0 40 28" fill="none" stroke="#1a1a1a" stroke-width="2.400"><rect x="1.200" y="1.200" width="37.600" height="25.600" rx="4.500"/><path d="M8 21.500h24"/><path d="M8 8.500h.1M16 8.500h.1M24 8.500h.1M32 8.500h.1M12 15.500h.1M20 15.500h.1M28 15.500h.1" stroke-width="3.500" stroke-linecap="round"/></svg></button>
    <button class="ml-[45px] pt-[2px]">ENG</button>
    <button class="flex items-center gap-5 ml-[45px]" aria-label="Network, sound and battery">
      <svg class="w-10 h-[30px]" viewBox="0 0 40 30" fill="none" stroke="#1a1a1a" stroke-width="2.800"><path d="M1.500 12.500Q9 1.500 20 1.500t18.500 11M6.500 18Q12 9 20 9t13.500 9M12 23.500q3-6.500 8-6.500t8 6.500"/><circle cx="20" cy="26.500" r="3" fill="#1a1a1a" stroke="none"/></svg>
      <svg class="w-[38px] h-[30px]" viewBox="0 0 38 30" fill="none" stroke="#1a1a1a" stroke-width="2.400"><path d="M16 1.500v27L8.500 22H5q-3.500 0-3.500-3.500v-7Q1.500 8 5 8h3.500zM23 8.500L37 22M37 8.500L23 22"/></svg>
      <svg class="w-[42px] h-9 mb-[6px]" viewBox="0 0 42 36" fill="none" stroke="#1a1a1a" stroke-width="2.400"><path d="M16 9h14q5.500 0 5.500 5.500V29q0 5.500-5.500 5.500H7Q1.500 34.500 1.500 29V18"/><path d="M38 17.500q3 0 3 3v2.500q0 3-3 3z" fill="#1a1a1a" stroke-width="1.500"/><path d="M15 13h14q3 0 3 3v12q0 3-3 3H8q-3 0-3-2l8-10z" fill="#1a1a1a" stroke="none"/><path d="M8 1L1 14h5L5 25l9-14H8z" fill="#1a1a1a" stroke="#eee" stroke-width=".8"/></svg>
    </button>
    <button class="ml-10 text-right leading-10"><span class="block">2:01 PM</span><span class="block">7/10/2025</span></button>
    <button class="ml-[22px]" aria-label="Notifications, do not disturb"><svg class="block w-9 h-10 overflow-visible" viewBox="0 0 36 40" fill="#1a1a1a"><path d="M2 26V14Q3 1 16 1q6 0 10 4l4 14v6l3 4v2H0v-3z"/><path d="M9 34h13q-1.500 5-6.500 5T9 34z"/><text x="23" y="14" font-size="20" font-weight="700" stroke="#eee" stroke-width="4" paint-order="stroke">z</text><text x="11" y="25" font-size="20" font-weight="700" fill="#eee">z</text></svg></button>
  </div>
</div>

<!-- context menu -->
<div class="absolute left-[2392px] top-[837px] w-[641px] p-[5px] rounded-[10px] border-3 border-[#e5e5e5] bg-[#f9f9f9] shadow-[0_20px_30px_rgba(0,0,0,0.16)] text-[28px] leading-10 text-black" role="menu">
  <button class="flex items-center w-full h-14 pt-[2px] pl-20 pr-[24px]" role="menuitem">View<svg class="w-[11px] h-[18px] ml-auto"><use href="#chev-right"/></svg></button>
  <button class="flex items-center w-full h-14 pt-[2px] pl-20 pr-[24px]" role="menuitem">Sort by<svg class="w-[11px] h-[18px] ml-auto"><use href="#chev-right"/></svg></button>
  <button class="flex items-center w-full h-14 pt-[2px] pl-20 pr-[24px]" role="menuitem">Group by<svg class="w-[11px] h-[18px] ml-auto"><use href="#chev-right"/></svg></button>
  <button class="flex items-center w-full h-14 pt-[2px] pl-20" role="menuitem">Refresh</button>
  <hr class="my-2 border-t-2 border-[#e8e8e8]">
  <button class="flex items-center w-full h-14 pt-[2px] pl-20" role="menuitem">Customize this folder...</button>
  <hr class="my-2 border-t-2 border-[#e8e8e8]">
  <button class="flex items-center w-full h-14 pt-[2px] pl-20 text-[#a0a0a0]" role="menuitem" disabled>Paste</button>
  <button class="flex items-center justify-between w-full h-14 pt-[2px] pl-20 pr-[42px]" role="menuitem"><span>Undo Move</span><span>Ctrl+Z</span></button>
  <button class="flex items-center w-full h-14 pt-[2px] pl-[15px]" role="menuitem">
    <svg class="w-10 h-[30px] mr-[25px]" viewBox="0 0 40 30"><rect width="40" height="30" rx="1.500" fill="#3b3b3b"/><path d="M0 0h13v5H0z" fill="#ccc"/><path d="M13 0h14v5H13z" fill="#999"/><path d="M27 0h13v5H27z" fill="#666"/><path d="M6 10l8 7.500L6 25" fill="none" stroke="#cfcfcf" stroke-width="3.500"/><path d="M19 24h13" stroke="#f0f0f0" stroke-width="4"/></svg>
    Open in Terminal
  </button>
  <button class="flex items-center w-full h-14 pt-[2px] pl-[15px]" role="menuitem"><svg class="w-10 h-10 mr-[25px]"><use href="#power-rename"/></svg>Rename with PowerRename</button>
  <button class="flex items-center w-full h-14 pt-[2px] pl-[15px]" role="menuitem"><svg class="w-10 h-10 mr-[25px]"><use href="#git"/></svg>Open Git GUI here</button>
  <button class="flex items-center w-full h-14 pt-[2px] pl-[15px] rounded bg-[#efefef]" role="menuitem"><svg class="w-10 h-10 mr-[25px]"><use href="#git"/></svg>Open Git Bash here</button>
  <button class="flex items-center w-full h-14 pt-[2px] pl-[15px]" role="menuitem">
    <svg class="w-10 h-10 mr-[25px]" viewBox="0 0 40 40"><path d="M30 0v11L5 30q-2 1-3 0l-2-2v-3z" fill="#0070b5"/><path d="M30 40V29L5 10q-2-1-3 0l-2 2v3z" fill="#0090df"/><path d="M29 0l9 4q2 1 2 3v26q0 2-2 3l-9 4z" fill="#26a9f3"/></svg>
    Open with Code
  </button>
  <button class="flex items-center w-full h-14 pt-[2px] pl-[15px]" role="menuitem"><svg class="w-10 h-10 mr-[25px]"><use href="#power-rename"/></svg>Rename with PowerRename</button>
  <hr class="my-2 border-t-2 border-[#e8e8e8]">
  <button class="flex items-center w-full h-14 pt-[2px] pl-20 pr-[24px]" role="menuitem">Give access to<svg class="w-[11px] h-[18px] ml-auto"><use href="#chev-right"/></svg></button>
  <hr class="my-2 border-t-2 border-[#e8e8e8]">
  <button class="flex items-center w-full h-14 pt-[2px] pl-20 pr-[24px]" role="menuitem">New<svg class="w-[11px] h-[18px] ml-auto"><use href="#chev-right"/></svg></button>
  <hr class="my-2 border-t-2 border-[#e8e8e8]">
  <button class="flex items-center w-full h-14 pt-[2px] pl-20" role="menuitem">Properties</button>
</div>

</body>
</html>
